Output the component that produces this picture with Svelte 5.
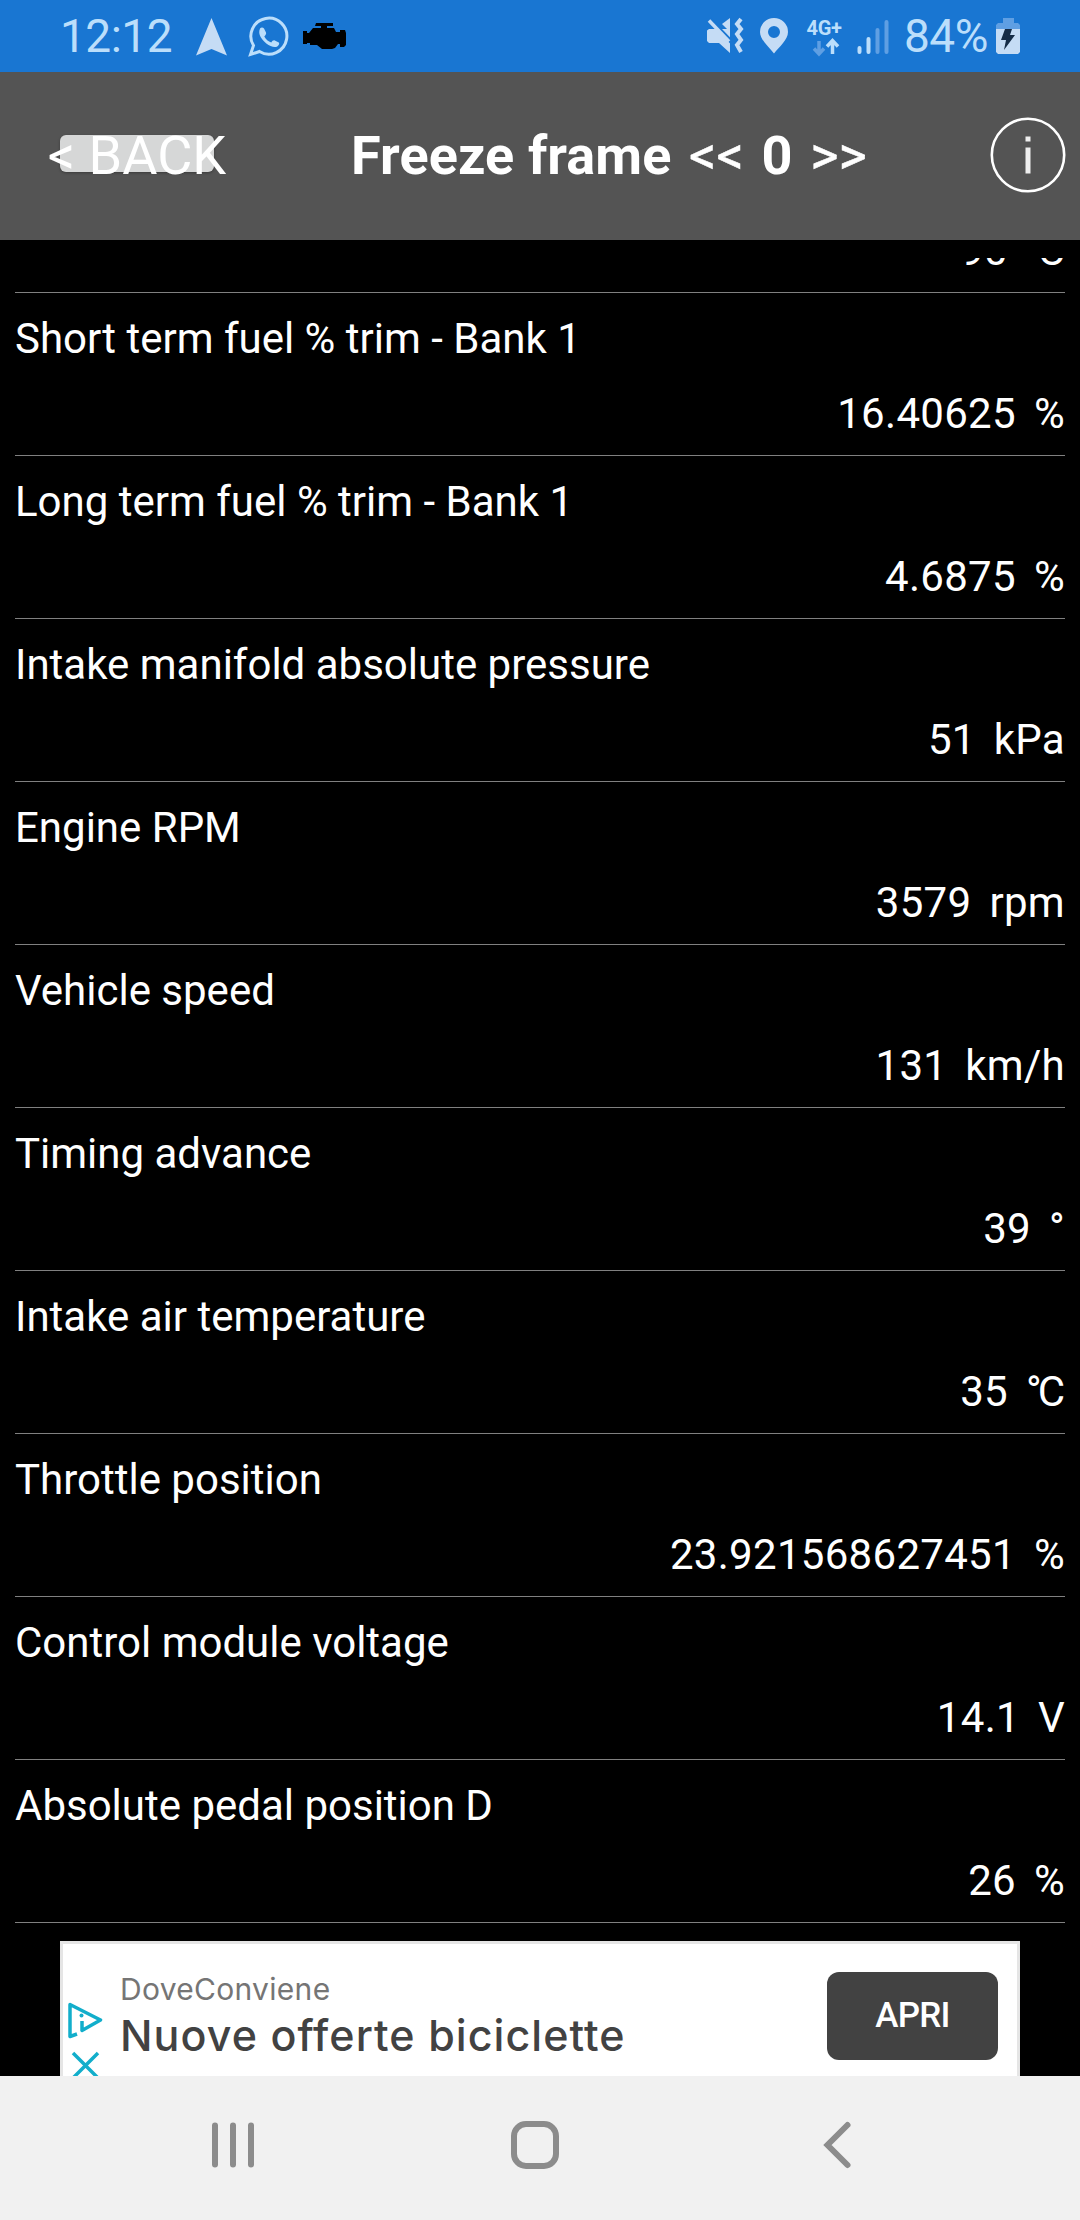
<svelte:options runes={true} />

<script lang="ts">
  type Reading = { label: string; value: string; unit: string };

  const readings: Reading[] = [
    { label: "Engine coolant temperature", value: "90", unit: "°C" },
    { label: "Short term fuel % trim - Bank 1", value: "16.40625", unit: "%" },
    { label: "Long term fuel % trim - Bank 1", value: "4.6875", unit: "%" },
    { label: "Intake manifold absolute pressure", value: "51", unit: "kPa" },
    { label: "Engine RPM", value: "3579", unit: "rpm" },
    { label: "Vehicle speed", value: "131", unit: "km/h" },
    { label: "Timing advance", value: "39", unit: "°" },
    { label: "Intake air temperature", value: "35", unit: "°C" },
    { label: "Throttle position", value: "23.921568627451", unit: "%" },
    { label: "Control module voltage", value: "14.1", unit: "V" },
    { label: "Absolute pedal position D", value: "26", unit: "%" },
  ];

  let frame = $state(0);
</script>

<div class="screen">
  <div class="status">
    <span class="status__clock">12:12</span>
    <svg class="status__left" width="152" height="72" viewBox="194 0 152 72">
      <path d="M211.500 18L227 55.500L211.500 49L196 55.500Z" fill="#c5dcf5" />
      <path d="M250.500 54.500L253.500 45.500A18 18 0 1 1 259.500 51.500Z" fill="none" stroke="#bbdefb" stroke-width="3" />
      <path d="M260 28.500c1-1.500 3-1.500 4 0l2 4c.5 1.500-.5 2.500-1.700 4 1.500 3 4 5 7 6 1-1.500 2-2.500 3.500-2l4 2c1 .8 0 3-1.500 4-3 1.500-7 0-11-3-4-3.500-9-9-6.300-15z" fill="#bbdefb" />
      <path d="M316 23h17v3h-6v2h7l2 4h4v-2h5l1 3v12l-2 2h-4v-3h-2l-3 4-3 1h-10l-5-4h-7v-2h-3v1h-4V31h4v2h2l4-5h8v-2h-6z" fill="#000" />
    </svg>
    <svg class="status__right" width="194" height="72" viewBox="704 0 194 72">
      <g fill="#c5dcf5">
        <path d="M707 30.500l2-1.500h9l12 0v24l-11-10h-10l-2-2z" />
        <path d="M722 24l8-6v14z" />
        <path d="M709.500 19l24 25" fill="none" stroke="#1976d2" stroke-width="4" />
        <path d="M709 20.500l20 21" fill="none" stroke="#c5dcf5" stroke-width="3.500" />
        <path d="M741 19l-4 5 4 5-4 5 4 6-4 5 4 7" fill="none" stroke="#c5dcf5" stroke-width="4" />
        <path fill-rule="evenodd" d="M774 18a14 14 0 0 1 14 14c0 8-9 15-14 21.500-5-6.500-14-13.500-14-21.500a14 14 0 0 1 14-14zm0 8a6 6 0 1 0 0 12 6 6 0 1 0 0-12z" />
      </g>
      <text x="806.500" y="34.500" class="status__network">4G+</text>
      <path d="M819 41v12M814 48.500l5 5.500 5-5.500" fill="none" stroke="#5f9fe3" stroke-width="3.500" />
      <path d="M832.500 54V41M827 46.500l5.500-6 5.500 6" fill="none" stroke="#bbdefb" stroke-width="3.500" />
      <path d="M859.500 48v4M868.500 39v13" stroke="#bbdefb" stroke-width="4" stroke-linecap="round" />
      <path d="M877.500 30v22M886.500 22v30" stroke="#5f9fe3" stroke-width="4" stroke-linecap="round" />
    </svg>
    <span class="status__percent">84%</span>
    <svg class="status__battery" width="24" height="36" viewBox="0 0 24 36">
      <path d="M7 0h11v5h4l2 2v4H0V7l2-2h5z" fill="#5f9fe3" />
      <path d="M0 11h24v23l-2 2H2l-2-2z" fill="#c5dcf5" />
      <path d="M9 11h7l-2 6h5L8 32l2-10H5z" fill="#152c47" />
    </svg>
  </div>

  <header class="header">
    <button class="back"><span>&lt; BACK</span></button>
    <h1 class="title">
      Freeze frame
      <span class="title__step">&lt;&lt;</span>
      {frame}
      <span class="title__step">&gt;&gt;</span>
    </h1>
    <svg class="info" width="76" height="76" viewBox="0 0 76 76">
      <circle cx="38" cy="38" r="36.200" fill="none" stroke="#fff" stroke-width="2.600" />
      <path d="M35.500 19.500h5v5h-5zM35.500 30.500h5v26h-5z" fill="#eee" />
    </svg>
  </header>

  <main class="list">
    {#each readings as reading (reading.label)}
      <section class="row">
        <div class="row__label">{reading.label}</div>
        <div class="row__value">
          <span>{reading.value}</span>
          <span class:row__degrees={reading.unit === "°C"}>{reading.unit}</span>
        </div>
      </section>
    {/each}
  </main>

  <aside class="ad">
    <svg class="ad__marks" width="40" height="78" viewBox="0 0 40 78" fill="none" stroke="#12aecb">
      <path d="M14 35l-7 2.500V5.500L37.500 21 19 31.500V22" stroke-width="3.500" stroke-linejoin="round" />
      <circle cx="18.500" cy="16.500" r="2" fill="#12aecb" stroke="none" />
      <path d="M10 54l25 25M35 54L10 79" stroke-width="3.500" />
    </svg>
    <div class="ad__text">
      <div class="ad__brand">DoveConviene</div>
      <div class="ad__headline">Nuove offerte biciclette</div>
    </div>
    <button class="ad__button">APRI</button>
  </aside>

  <nav class="nav">
    <svg width="1080" height="144" viewBox="0 0 1080 144" fill="none" stroke="#8c8c8c">
      <path d="M215 49.500v39M233 49.500v39M251 49.500v39" stroke-width="6" stroke-linecap="round" />
      <rect x="514" y="48" width="42" height="42" rx="12" stroke-width="6" />
      <path d="M847.500 49l-20 20 20 20" stroke-width="6" stroke-linecap="round" />
    </svg>
  </nav>
</div>

<style>
  :global(body) {
    margin: 0;
    background: #000;
  }

  .screen {
    display: flex;
    flex-direction: column;
    width: 1080px;
    height: 2220px;
    overflow: hidden;
    background: #000;
    color: #fff;
    font-family: Roboto, "Noto Sans", sans-serif;
  }

  .status {
    display: flex;
    align-items: center;
    flex-shrink: 0;
    height: 72px;
    padding-left: 60px;
    background: #1976d2;
    color: #bbdefb;
    font-size: 46px;
    letter-spacing: -0.5px;
  }

  .status__clock {
    width: 134px;
    line-height: 76px;
  }

  .status__right {
    margin-left: 358px;
  }

  .status__network {
    fill: #bbdefb;
    font-size: 20px;
    font-weight: 700;
    letter-spacing: -0.3px;
  }

  .status__percent {
    width: 98px;
    margin-left: 6px;
    line-height: 76px;
    white-space: nowrap;
  }

  .status__battery {
    margin-left: -6px;
  }

  .header {
    display: flex;
    align-items: center;
    flex-shrink: 0;
    box-sizing: border-box;
    height: 168px;
    padding: 0 14px 3px 60px;
    background: #545454;
  }

  .back {
    display: flex;
    align-items: center;
    justify-content: center;
    width: 154px;
    height: 37px;
    margin-bottom: 2px;
    padding: 4px 0 0;
    border: 0;
    border-radius: 6px;
    background: #d6d7d7;
    box-shadow: 0 1px 3px rgba(0, 0, 0, 0.3);
    color: #fff;
    font: 400 54px/37px Roboto, sans-serif;
    white-space: nowrap;
  }

  .title {
    margin: 2px 0 0 137px;
    font-size: 54px;
    font-weight: 700;
    line-height: 64px;
    letter-spacing: 0.1px;
    white-space: nowrap;
  }

  .title__step {
    margin: 0 4px;
    font-weight: 400;
    -webkit-text-stroke: 0.5px #fff;
  }

  .info {
    margin-left: auto;
  }

  .list {
    display: flex;
    flex-direction: column;
    justify-content: flex-end;
    flex-shrink: 0;
    height: 1665px;
    margin: 18px 15px 18px;
    overflow: hidden;
  }

  .row {
    display: flex;
    flex-direction: column;
    justify-content: space-between;
    flex-shrink: 0;
    box-sizing: border-box;
    height: 163px;
    padding: 21px 0 16px;
    border-bottom: 1px solid #808080;
    font-size: 42px;
    line-height: 50px;
  }

  .row__value {
    display: flex;
    justify-content: flex-end;
    gap: 18px;
    letter-spacing: 0.3px;
  }

  .row__degrees {
    margin-right: 4px;
    letter-spacing: -4px;
  }

  .ad {
    display: flex;
    flex-shrink: 0;
    box-sizing: border-box;
    width: 960px;
    height: 135px;
    margin-left: 60px;
    overflow: hidden;
    border: 3px solid #e5e5e5;
    border-bottom: 0;
    background: #fff;
  }

  .ad__marks {
    flex-shrink: 0;
    margin-top: 55px;
  }

  .ad__text {
    flex: 1;
    padding: 27px 0 0 17px;
    font-family: Inter, Lato, sans-serif;
    white-space: nowrap;
  }

  .ad__brand {
    color: #757575;
    font-size: 30px;
    line-height: 36px;
    letter-spacing: 0.3px;
  }

  .ad__headline {
    margin-top: 2px;
    color: #424242;
    font-size: 43px;
    font-weight: 500;
    line-height: 52px;
    letter-spacing: 1.05px;
  }

  .ad__button {
    width: 171px;
    height: 88px;
    margin: 28px 19px 0 0;
    padding: 0 0 2px;
    border: 0;
    border-radius: 12px;
    background: #424242;
    color: #fff;
    font: 500 35px Roboto, sans-serif;
    letter-spacing: -0.8px;
  }

  .nav {
    flex-shrink: 0;
    height: 144px;
    background: #f1f1f1;
  }
</style>
